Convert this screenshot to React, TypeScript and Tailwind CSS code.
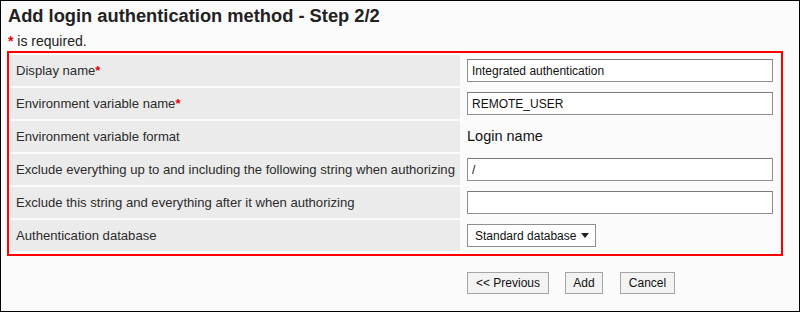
import React from "react";

type Row = {
  label: string;
  required?: boolean;
  kind: "input" | "text" | "select";
  value?: string;
};

const rows: Row[] = [
  { label: "Display name", required: true, kind: "input", value: "Integrated authentication" },
  { label: "Environment variable name", required: true, kind: "input", value: "REMOTE_USER" },
  { label: "Environment variable format", kind: "text", value: "Login name" },
  {
    label: "Exclude everything up to and including the following string when authorizing",
    kind: "input",
    value: "/",
  },
  { label: "Exclude this string and everything after it when authorizing", kind: "input", value: "" },
  { label: "Authentication database", kind: "select", value: "Standard database" },
];

const Field: React.FC<{ row: Row }> = ({ row }) => {
  if (row.kind === "text") {
    return <span className="text-[14.5px] text-[#111]">{row.value}</span>;
  }
  if (row.kind === "select") {
    return (
      <div className="flex h-[23px] w-[129px] items-center gap-[5px] whitespace-nowrap border border-[#8f8f8f] bg-white pl-[7px] text-[12px] text-[#111]">
        <span>{row.value}</span>
        <svg width="8" height="5" viewBox="0 0 8 5">
          <path d="M0 0h8L4 5z" fill="#222" />
        </svg>
      </div>
    );
  }
  return (
    <div className="flex h-[23px] w-[306px] items-center whitespace-nowrap border border-[#8f8f8f] border-t-[#7a7a7a] bg-white px-[4px] text-[12px] text-[#111]">
      {row.value}
    </div>
  );
};

const Btn: React.FC<{ label: string; w: string }> = ({ label, w }) => (
  <button
    className={`flex h-[22px] ${w} items-center justify-center border border-[#a6a6a6] bg-[#f3f3f3] text-[12px] text-[#111]`}
  >
    {label}
  </button>
);

export default function App() {
  return (
    <div className="h-[312px] w-[800px] border border-black bg-[#fbfbfb] font-['Liberation_Sans',Arial,sans-serif] text-[#333]">
      <h1 className="pl-[7px] pt-[4px] text-[18.3px] font-bold leading-[21px] text-[#222]">
        Add login authentication method - Step 2/2
      </h1>
      <p className="mt-[7px] pl-[7px] text-[14px] leading-[16px] text-[#222]">
        <span className="font-bold text-[#e00]">*</span> is required.
      </p>
      <div className="ml-[6px] mt-[2px] w-[776px] border-2 border-[#f00] px-[1px] pb-[3px] pt-[2px]">
        <div className="grid grid-cols-[450px_1fr] gap-y-[2px]">
          {rows.map((r) => (
            <React.Fragment key={r.label}>
              <div className="flex h-[31px] items-center whitespace-nowrap bg-[#ebebeb] pl-[6px] text-[13.1px] text-[#2b2b2b]">
                {r.label}
                {r.required && <span className="font-bold text-[#e00]">*</span>}
              </div>
              <div className="flex h-[31px] items-center pl-[7px]">
                <Field row={r} />
              </div>
            </React.Fragment>
          ))}
        </div>
      </div>
      <div className="mt-[16px] flex items-center pl-[466px]">
        <Btn label="<< Previous" w="w-[82px]" />
        <div className="ml-[16px]">
          <Btn label="Add" w="w-[38px]" />
        </div>
        <div className="ml-[17px]">
          <Btn label="Cancel" w="w-[55px]" />
        </div>
      </div>
    </div>
  );
}
